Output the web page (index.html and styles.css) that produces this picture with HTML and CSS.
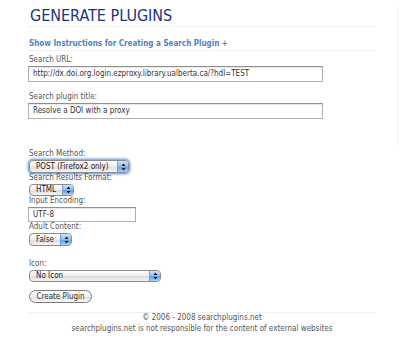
FILE: index.html
```html
<!DOCTYPE html>
<html lang="en">
<head>
  <meta charset="UTF-8">
  <title>Generate Plugins</title>
  <link rel="stylesheet" href="styles.css">
</head>
<body>
  <div class="page">
    <div class="main">
      <h1 class="title">GENERATE PLUGINS</h1>
      <div class="toggle-row">
        <a class="toggle" href="#">Show Instructions for Creating a Search Plugin +</a>
      </div>

      <form class="plugin-form">
        <div class="field first">
          <label>Search URL:</label>
          <div class="text-input wide">http://dx.doi.org.login.ezproxy.library.ualberta.ca/?hdl=TEST</div>
        </div>
        <div class="field spaced">
          <label>Search plugin title:</label>
          <div class="text-input wide">Resolve a DOI with a proxy</div>
        </div>

        <div class="field group">
          <label>Search Method:</label>
          <div class="select focused method">
            <span class="value">POST (Firefox2 only)</span>
            <span class="arrows"><svg width="5" height="8" viewBox="0 0 5 8"><path d="M2.5 0.5 L4.5 3 L0.5 3 Z M0.5 5 L4.5 5 L2.5 7.5 Z" fill="#1a1a1a"/></svg></span>
          </div>
        </div>
        <div class="field">
          <label>Search Results Format:</label>
          <div class="select small format">
            <span class="value">HTML</span>
            <span class="arrows"><svg width="5" height="8" viewBox="0 0 5 8"><path d="M2.5 0.5 L4.5 3 L0.5 3 Z M0.5 5 L4.5 5 L2.5 7.5 Z" fill="#1a1a1a"/></svg></span>
          </div>
        </div>
        <div class="field">
          <label>Input Encoding:</label>
          <div class="text-input encoding">UTF-8</div>
        </div>
        <div class="field">
          <label>Adult Content:</label>
          <div class="select adult">
            <span class="value">False</span>
            <span class="arrows"><svg width="5" height="8" viewBox="0 0 5 8"><path d="M2.5 0.5 L4.5 3 L0.5 3 Z M0.5 5 L4.5 5 L2.5 7.5 Z" fill="#1a1a1a"/></svg></span>
          </div>
        </div>

        <div class="field icon-field">
          <label>Icon:</label>
          <div class="select icon">
            <span class="value">No Icon</span>
            <span class="arrows"><svg width="5" height="8" viewBox="0 0 5 8"><path d="M2.5 0.5 L4.5 3 L0.5 3 Z M0.5 5 L4.5 5 L2.5 7.5 Z" fill="#1a1a1a"/></svg></span>
          </div>
        </div>

        <button type="button" class="create-button">Create Plugin</button>
      </form>

      <footer class="footer">
        <p>&copy; 2006 - 2008 searchplugins.net</p>
        <p>searchplugins.net is not responsible for the content of external websites</p>
      </footer>
    </div>
    <div class="sidebar"></div>
  </div>
</body>
</html>
```

FILE: styles.css
```css
body {
  margin: 0;
  background: #ffffff;
  font-family: 'DejaVu Sans Condensed', 'DejaVu Sans', sans-serif;
  font-size: 8px;
  color: #555555;
}
.page {
  display: flex;
  align-items: flex-start;
}
.main {
  width: 348px;
  margin-left: 28px;
}
.sidebar {
  margin-left: 21px;
  margin-top: 5px;
  height: 140px;
  border-left: 1px solid #f3f3f3;
}

/*---------------------------------- HEADER ----------------------------------*/
.title {
  margin: 6px 0 0 0;
  padding: 0 0 0 2px;
  font-size: 16px;
  line-height: 20px;
  font-weight: normal;
  color: #22307f;
  border-bottom: 1px solid #f0f0f0;
}
.toggle-row {
  margin-top: 11px;
  line-height: 12px;
  border-bottom: 1px solid #f0f0f0;
}
.toggle {
  padding-left: 1px;
  color: #5282c2;
  font-weight: bold;
  text-decoration: none;
  font-size: 8px;
}

/*---------------------------------- FORM ----------------------------------*/
.plugin-form {
  display: flex;
  flex-direction: column;
  align-items: flex-start;
}
.field {
  display: flex;
  flex-direction: column;
  align-items: flex-start;
}
.field label {
  padding-left: 1px;
  line-height: 10px;
  height: 10px;
  margin-bottom: 1px;
}
.field.first {
  margin-top: 4px;
}
.field.spaced {
  margin-top: 10px;
}
.field.group {
  margin-top: 30px;
}
.field.icon-field {
  margin-top: 13px;
}
.text-input {
  box-sizing: border-box;
  height: 16px;
  padding: 0 4px;
  line-height: 14px;
  border: 1px solid #b0b0b0;
  border-top-color: #909090;
  box-shadow: inset 0 1px 1px rgba(0, 0, 0, 0.1);
  color: #333333;
  white-space: nowrap;
}
.text-input.wide {
  width: 295px;
}
.text-input.encoding {
  width: 108px;
  height: 15px;
  line-height: 13px;
}

/* aqua style popups */
.select {
  box-sizing: border-box;
  display: flex;
  align-items: stretch;
  height: 13px;
  margin-left: 1px;
  border: 1px solid #8c8c8c;
  border-radius: 4px;
  background: linear-gradient(#ffffff, #eeeeee 50%, #dcdcdc 51%, #f3f3f3);
  overflow: hidden;
  color: #222222;
}
.select .value {
  flex: 1;
  padding-left: 6px;
  line-height: 11px;
  font-size: 8px;
  white-space: nowrap;
}
.select .arrows {
  width: 10px;
  display: flex;
  align-items: center;
  justify-content: center;
  border-left: 1px solid #7d9dc8;
  background: linear-gradient(#cfe3fa, #8fbdf0 50%, #5d9ce6 51%, #a7d1fa);
}
.select.focused {
  box-shadow: 0 0 0 1px #8db2e6, 0 0 2px 2px #a9c7ef;
}
.select.method {
  width: 100px;
}
.select.format {
  width: 45px;
  height: 12px;
}
.select.format .value {
  line-height: 10px;
}
.select.adult {
  width: 43px;
}
.select.icon {
  width: 132px;
  height: 12px;
}
.select.icon .value {
  line-height: 10px;
}

.create-button {
  box-sizing: border-box;
  margin: 8px 0 0 1px;
  width: 63px;
  height: 13px;
  padding: 0;
  border: 1px solid #7a7a7a;
  border-radius: 7px;
  background: linear-gradient(#ffffff, #f0f0f0 50%, #e0e0e0 51%, #f7f7f7);
  font-family: 'DejaVu Sans Condensed', 'DejaVu Sans', sans-serif;
  font-size: 8px;
  line-height: 11px;
  color: #333333;
}

/*---------------------------------- FOOTER ----------------------------------*/
.footer {
  margin-top: 9px;
  border-top: 1px solid #f0f0f0;
  text-align: center;
}
.footer p {
  margin: 0;
  line-height: 10.5px;
}
```
